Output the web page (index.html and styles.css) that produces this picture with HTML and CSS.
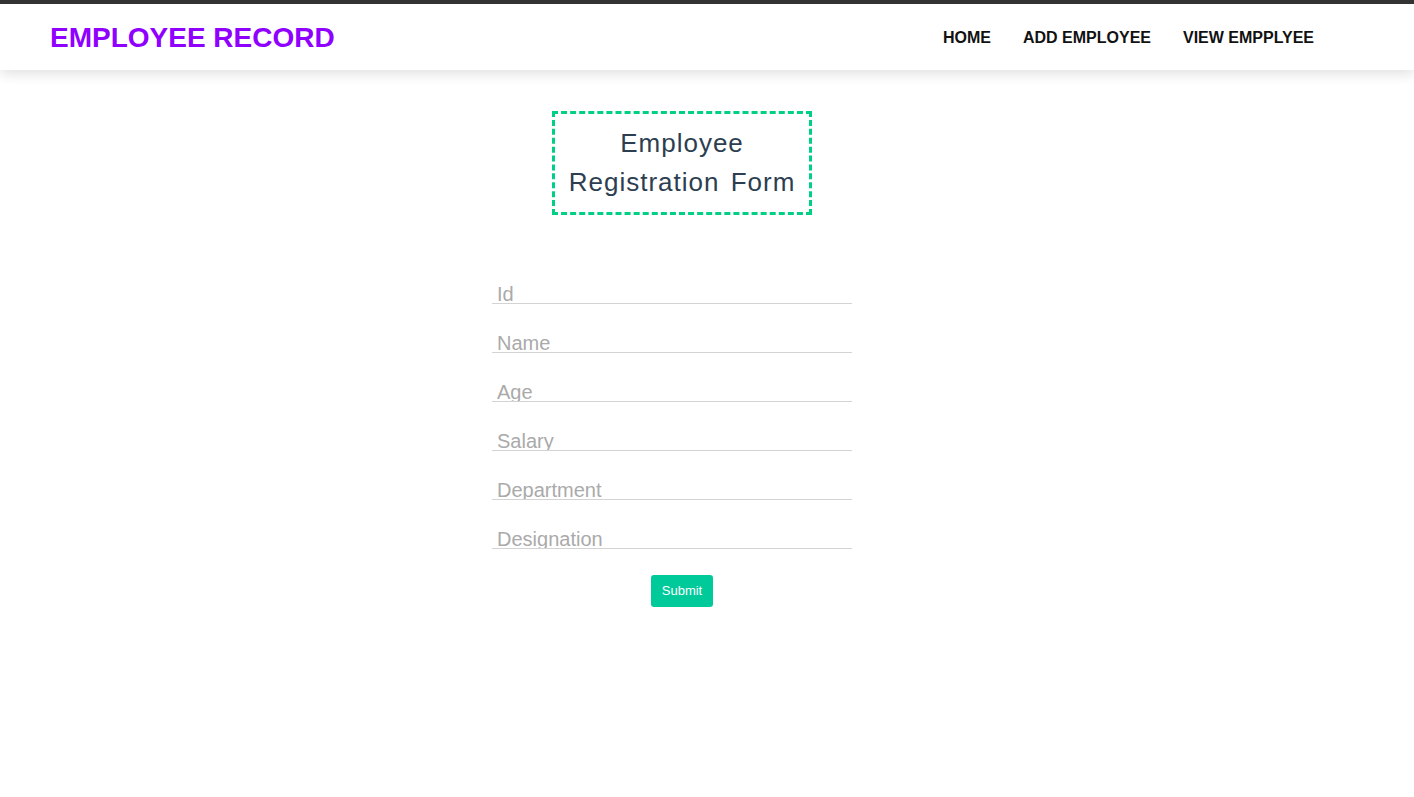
FILE: index.html
```html
<!DOCTYPE html>
<html>
<head>
<meta charset="utf-8">
<link rel="stylesheet" href="styles.css">
</head>
<body>
<header class="header">
  <div class="brand">EMPLOYEE RECORD</div>
  <nav class="nav">
    <a href="#">HOME</a>
    <a href="#">ADD EMPLOYEE</a>
    <a href="#">VIEW EMPPLYEE</a>
  </nav>
</header>
<main class="main">
  <h1 class="title">Employee Registration Form</h1>
  <form class="form">
    <input class="field" placeholder="Id">
    <input class="field" placeholder="Name">
    <input class="field" placeholder="Age">
    <input class="field" placeholder="Salary">
    <input class="field" placeholder="Department">
    <input class="field" placeholder="Designation">
    <button class="submit" type="button">Submit</button>
  </form>
</main>
</body>
</html>
```

FILE: styles.css
```css
* { box-sizing: border-box; }
body {
  margin: 0;
  background: #fff;
  font-family: "Liberation Sans", Arial, sans-serif;
  border-top: 4px solid #333;
}
.header {
  height: 66px;
  display: flex;
  align-items: center;
  justify-content: space-between;
  padding: 2px 100px 0 50px;
  background: #fff;
  box-shadow: 0 4px 12px rgba(0,0,0,0.12);
  position: relative;
}
.brand {
  color: #8f00ff;
  font-weight: bold;
  font-size: 28px;
}
.nav {
  display: flex;
  gap: 32px;
}
.nav a {
  color: #111;
  text-decoration: none;
  font-weight: bold;
  font-size: 16px;
}
.main {
  display: flex;
  flex-direction: column;
  align-items: center;
  padding-top: 41px;
  padding-right: 50px;
}
.title {
  margin: 0;
  width: 260px;
  padding: 10px 8px;
  border: 3px dashed #00d084;
  text-align: center;
  font-family: "Liberation Sans", Arial, sans-serif;
  font-weight: normal;
  font-size: 26px;
  line-height: 39px;
  letter-spacing: 1px;
  word-spacing: 3px;
  color: #2c3e50;
}
.form {
  margin-top: 64px;
  width: 380px;
  display: flex;
  flex-direction: column;
  align-items: center;
}
.field {
  align-self: flex-start;
  width: 360px;
  height: 25px;
  margin-bottom: 24px;
  border: none;
  border-bottom: 1px solid #d3d3d3;
  padding: 6px 5px 0;
  font-family: "Liberation Sans", Arial, sans-serif;
  font-size: 20px;
  outline: none;
}
.field::placeholder { color: #aaa; }
.submit {
  margin-top: 2px;
  width: 62px;
  height: 32px;
  background: #00c99a;
  color: #fff;
  border: none;
  border-radius: 3px;
  font-family: "Liberation Sans", Arial, sans-serif;
  font-size: 13px;
  padding: 0 0 2px;
}
```
